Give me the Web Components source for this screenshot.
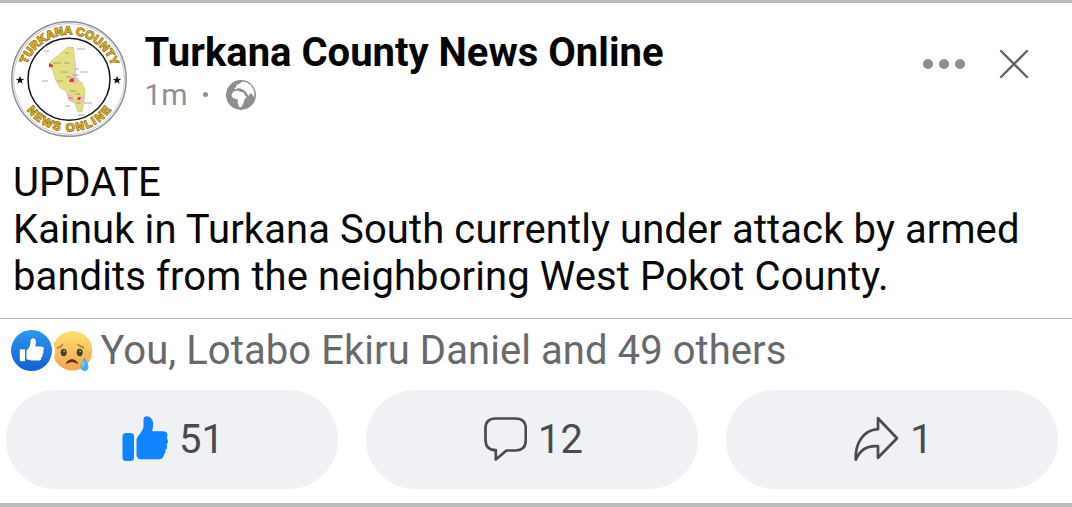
<!DOCTYPE html>
<html lang="en">

<head>
    <meta charset="utf-8">
    <title>Turkana County News Online</title>
    <style>
    body {
        margin: 0;
        background: #fff;
        font-family: Roboto, "Liberation Sans", sans-serif;
    }
    </style>
</head>

<body>
    <news-post>
        <post-header slot="header">
            <page-logo slot="logo"></page-logo>
            <span slot="name">Turkana County News Online</span>
            <span slot="time">1m</span>
        </post-header>
        <post-text slot="text">UPDATE<br>Kainuk in Turkana South currently under attack by armed<br>bandits from the neighboring West Pokot County.</post-text>
        <post-reactions slot="reactions">You, Lotabo Ekiru Daniel and 49 others</post-reactions>
        <post-action slot="actions" icon="like">51</post-action>
        <post-action slot="actions" icon="comment">12</post-action>
        <post-action slot="actions" icon="share">1</post-action>
    </news-post>

    <template id="news-post-template">
        <style>
        :host {
            display: flex;
            flex-direction: column;
            box-sizing: border-box;
            width: 1072px;
            height: 507px;
            border-top: 3px solid #babbc1;
            border-bottom: 4px solid #babbbf;
            overflow: hidden;
        }
        .actions {
            display: grid;
            grid-template-columns: repeat(3, 332.5px);
            column-gap: 27.5px;
            padding: 12.5px 0 0 5.5px;
        }
        </style>
        <slot name="header"></slot>
        <slot name="text"></slot>
        <slot name="reactions"></slot>
        <div class="actions"><slot name="actions"></slot></div>
    </template>

    <template id="post-header-template">
        <style>
        :host {
            display: flex;
            height: 156px;
            box-sizing: border-box;
            padding: 17px 43px 0 11px;
        }
        .info {
            flex: 1;
            padding-left: 16.5px;
        }
        .name {
            margin-top: 9px;
            line-height: 47px;
            font-size: 40px;
            font-weight: 700;
            color: #050505;
            white-space: nowrap;
        }
        .meta {
            display: flex;
            align-items: center;
            height: 37px;
            font-size: 30px;
            color: #8e8f93;
        }
        .dot {
            width: 5px;
            height: 5px;
            margin: 0 18px 0 15px;
            border-radius: 50%;
            background: #8e8f93;
        }
        .tools {
            display: flex;
            align-items: flex-start;
            gap: 33px;
            padding-top: 29px;
        }
        svg { display: block; }
        </style>
        <slot name="logo"></slot>
        <div class="info">
            <div class="name"><slot name="name"></slot></div>
            <div class="meta">
                <slot name="time"></slot>
                <i class="dot"></i>
                <svg width="30" height="30" viewBox="0 0 30 30">
                    <circle cx="15" cy="15" r="15" fill="#8e8f93"/>
                    <!-- Europe and Asia, then Africa -->
                    <path fill="#fff" d="M8.500 8.500 10.500 6.500 10.500 5 14 3.500 16 1.800 20 2 25 5.200 28.200 11 28.200 17.500 26 14 24 13.500 22.500 16 19.500 11.500 17 9.500 13.500 8.300 11 8.500 9.500 9.500z"/>
                    <path fill="#fff" d="M8 11.200 12 10.600 13.500 11.500 17.500 12.600 19.300 15.800 20.800 16.500 18.500 19.500 17.500 23 15.500 27 13.300 27 12 23.500 11.500 19.300 7.500 18.300 5.500 16 6 13.500z"/>
                </svg>
            </div>
        </div>
        <div class="tools">
            <svg width="44" height="30" viewBox="0 0 44 30" fill="#8c8d90">
                <circle cx="6" cy="15" r="5"/>
                <circle cx="22" cy="15" r="5"/>
                <circle cx="38" cy="15" r="5"/>
            </svg>
            <svg width="30" height="30" viewBox="0 0 30 30" fill="none" stroke="#626366" stroke-width="2.4" stroke-linecap="round">
                <path d="M2 2 28 28M28 2 2 28"/>
            </svg>
        </div>
    </template>

    <template id="page-logo-template">
        <style>
        :host { display: block; width: 117px; height: 118px; }
        svg { display: block; }
        .ring {
            font: 700 11.5px "Liberation Sans", sans-serif;
            fill: #dcae22;
            stroke: #7d6524;
            stroke-width: 1.2px;
            paint-order: stroke;
        }
        </style>
        <svg width="117" height="118" viewBox="11 20 117 118">
            <defs>
                <path id="top-arc" d="M24.500 79A44.500 44.500 0 0 1 113.500 79"/>
                <path id="bottom-arc" d="M16.500 79A52.500 52.500 0 0 0 121.500 79"/>
            </defs>
            <circle cx="69" cy="79" r="57.200" fill="#fff" stroke="#8d8e92" stroke-width="1.500"/>
            <circle cx="69" cy="79" r="55.500" fill="none" stroke="#b9babd" stroke-width=".8"/>
            <circle cx="69" cy="79.300" r="41" fill="#fff" stroke="#151515" stroke-width="1.500"/>
            <text class="ring" text-anchor="middle"><textPath href="#top-arc" startOffset="50.500%" textLength="111">TURKANA COUNTY</textPath></text>
            <text class="ring" text-anchor="middle"><textPath href="#bottom-arc" startOffset="50%" textLength="98">NEWS ONLINE</textPath></text>
            <g fill="#151515">
                <path id="star" d="M20 75.800 21.100 78.800 24.200 78.900 21.800 80.800 22.600 83.800 20 82.100 17.400 83.800 18.200 80.800 15.800 78.900 18.900 78.800z"/>
                <use href="#star" x="97"/>
            </g>
            <path fill="#e4df83" stroke="#b9b67a" stroke-width=".5" d="M68 47 73.500 47.500 74.500 59 74 73 77 79 82 83 85 90 84 102 82 112 78 112 75 103 69 100 66 91 60 88 55 79 53 71 49 65 51 61z"/>
            <path fill="#d5d1ce" d="M73 59 76 61 76 75 79 80 76 82 72 78 73 70z"/>
            <path fill="#f0bdb0" d="M70 78 76 77 79 81 75 84 70 83zM67 93 73 95 75 102 69 101zM79 95 84 96 84 101 79 103z"/>
            <path fill="#dc423f" d="M49 63 53 65 53 67 49 67zM70 79 74 78 74 82 69 82zM78 97 81 97 80 100 77 100z"/>
            <g stroke="#77765f" stroke-width=".8" opacity=".75">
                <path d="M44 51h5M77 49h8M65 53h4M53 63h8M64 63h6M61 72h6M66 77h5M57 81h6M73 75h6M80 72h8M42 81h6M70 91h6M75 94h5M68 98h5M76 103h5M84 103h8M65 106h5M78 115h7M75 69h4"/>
            </g>
        </svg>
    </template>

    <template id="post-text-template">
        <style>
        :host {
            display: block;
            height: 159px;
            padding-left: 13px;
            font-size: 40px;
            line-height: 47px;
            color: #080808;
            letter-spacing: .1px;
            white-space: nowrap;
        }
        </style>
        <slot></slot>
    </template>

    <template id="post-reactions-template">
        <style>
        :host {
            display: flex;
            align-items: center;
            box-sizing: border-box;
            height: 59px;
            padding: 5px 0 0 11px;
            border-top: 1px solid #b8b9bb;
            font-size: 40px;
            line-height: 47px;
            color: #68696c;
            letter-spacing: .07px;
            white-space: nowrap;
        }
        svg { display: block; margin-right: 7.500px; }
        </style>
        <svg width="82" height="42" viewBox="0 0 82 42">
            <defs>
                <linearGradient id="blue" x2="0" y2="1">
                    <stop stop-color="#2e95f1"/>
                    <stop offset="1" stop-color="#1460d3"/>
                </linearGradient>
                <linearGradient id="yellow" x2="0" y2="1">
                    <stop stop-color="#fce172"/>
                    <stop offset="1" stop-color="#f2a44e"/>
                </linearGradient>
            </defs>
            <circle cx="61.500" cy="20.800" r="19.800" fill="url(#yellow)"/>
            <circle cx="20.500" cy="21" r="23.500" fill="#fff"/>
            <circle cx="20.500" cy="20.500" r="20.500" fill="url(#blue)"/>
            <rect x="8.800" y="19.300" width="5.200" height="12" rx=".8" fill="#fff"/>
            <path fill="#fff" d="M15.500 20.600C18 18.500 19.500 15.500 19.500 12 19.500 9.300 20.400 8.200 22 8.200 24.900 8.200 25.600 11.200 24.300 16.500H30.500C33.200 16.500 33.700 19.500 32 20.500 33 21.800 32.700 23.500 31.300 24.100 32.200 25.500 31.500 27 30.200 27.500 30.700 29.500 29.500 30.500 27.700 30.500H20.500L15.500 29.200z"/>
            <path d="M46.500 18Q50 17.500 51.500 14.500M67 14.500Q69.500 17 72.500 17.500" fill="none" stroke="#b07726" stroke-width="1.500" stroke-linecap="round"/>
            <ellipse cx="52.700" cy="22.500" rx="3" ry="3.700" fill="#46412c"/>
            <ellipse cx="68.700" cy="22.500" rx="3" ry="3.700" fill="#46412c"/>
            <path d="M55.500 33.500C57 28.500 65 28.500 66.500 33.500 63 31 59 31 55.500 33.500z" fill="#5c291b" stroke="#5c291b" stroke-width="1"/>
            <circle cx="53.200" cy="21.200" r=".9" fill="#a7a796"/>
            <circle cx="69.200" cy="21.200" r=".9" fill="#a7a796"/>
            <path fill="#46b0e4" d="M73.500 27.500C75.500 31 77.500 34 77.500 37 77.500 42.200 69.500 42.200 69.500 37 69.500 34 72 31 73.500 27.500z"/>
            <path d="M71.500 37Q71.500 34 73.500 31.500" fill="none" stroke="#8bd7f2" stroke-width="1.400"/>
        </svg>
        <slot></slot>
    </template>

    <template id="post-action-template">
        <style>
        :host {
            display: flex;
            align-items: center;
            justify-content: center;
            box-sizing: border-box;
            height: 99.5px;
            padding-left: 2px;
            border-radius: 50px;
            background: #f0f1f5;
            font-size: 40px;
            line-height: 46px;
            color: #4a4b4e;
        }
        svg { display: none; margin-right: 11.5px; }
        .count { padding-top: 2px; }
        :host([icon="like"]) .like,
        :host([icon="comment"]) .comment,
        :host([icon="share"]) .share { display: block; }
        </style>
        <svg class="like" width="46" height="46" viewBox="0 0 46 46" fill="#1083ff">
            <rect x=".5" y="17" width="11.500" height="28" rx="3.500"/>
            <path d="M14.500 23.500C15 20 21 16 21.500 10.500V3.500C21.500-.5 27-.5 29.300 2.500 32.300 6.200 31 11 30.200 15.200H41C44.500 15.200 46.300 17.500 45.200 20.500L45 22.500C46.600 24.500 46.200 27 44.600 28.300 45.500 30.500 45 32.500 43.400 34 43.700 36.500 43 37.500 42 38.500 41.500 41.500 40 43.200 37 43.200H19C16 43.200 14.500 41.500 14.500 38.500z"/>
        </svg>
        <svg class="comment" width="44" height="46" viewBox="0 0 44 46" fill="none" stroke="#4a4b4e" stroke-width="2.700" stroke-linejoin="round">
            <path d="M12.500 2.500H32.500Q42.800 2.500 42.800 12.500V24Q42.800 34.500 32.500 34.500H23.500L12.800 43.500V34.200Q2.500 34.200 2.500 23.500V12.500Q2.500 2.500 12.500 2.500z"/>
        </svg>
        <svg class="share" width="46" height="46" viewBox="0 0 46 46" fill="none" stroke="#4a4b4e" stroke-width="2.700" stroke-linejoin="round">
            <path d="M25 2.200 44 22.200 25 41.700V30.200C14 29.200 7 33.700 2.800 43.700 2 27.700 10 14.200 25 13.200z"/>
        </svg>
        <span class="count"><slot></slot></span>
    </template>

    <script>
    // each element clones the template that carries its own name
    function define(name) {
        customElements.define(name, class extends HTMLElement {
            constructor() {
                super();
                const template = document.getElementById(name + '-template').content;
                this.attachShadow({ mode: 'open' }).appendChild(template.cloneNode(true));
            }
        });
    }

    define('news-post');
    define('post-header');
    define('page-logo');
    define('post-text');
    define('post-reactions');
    define('post-action');
    </script>
</body>

</html>
